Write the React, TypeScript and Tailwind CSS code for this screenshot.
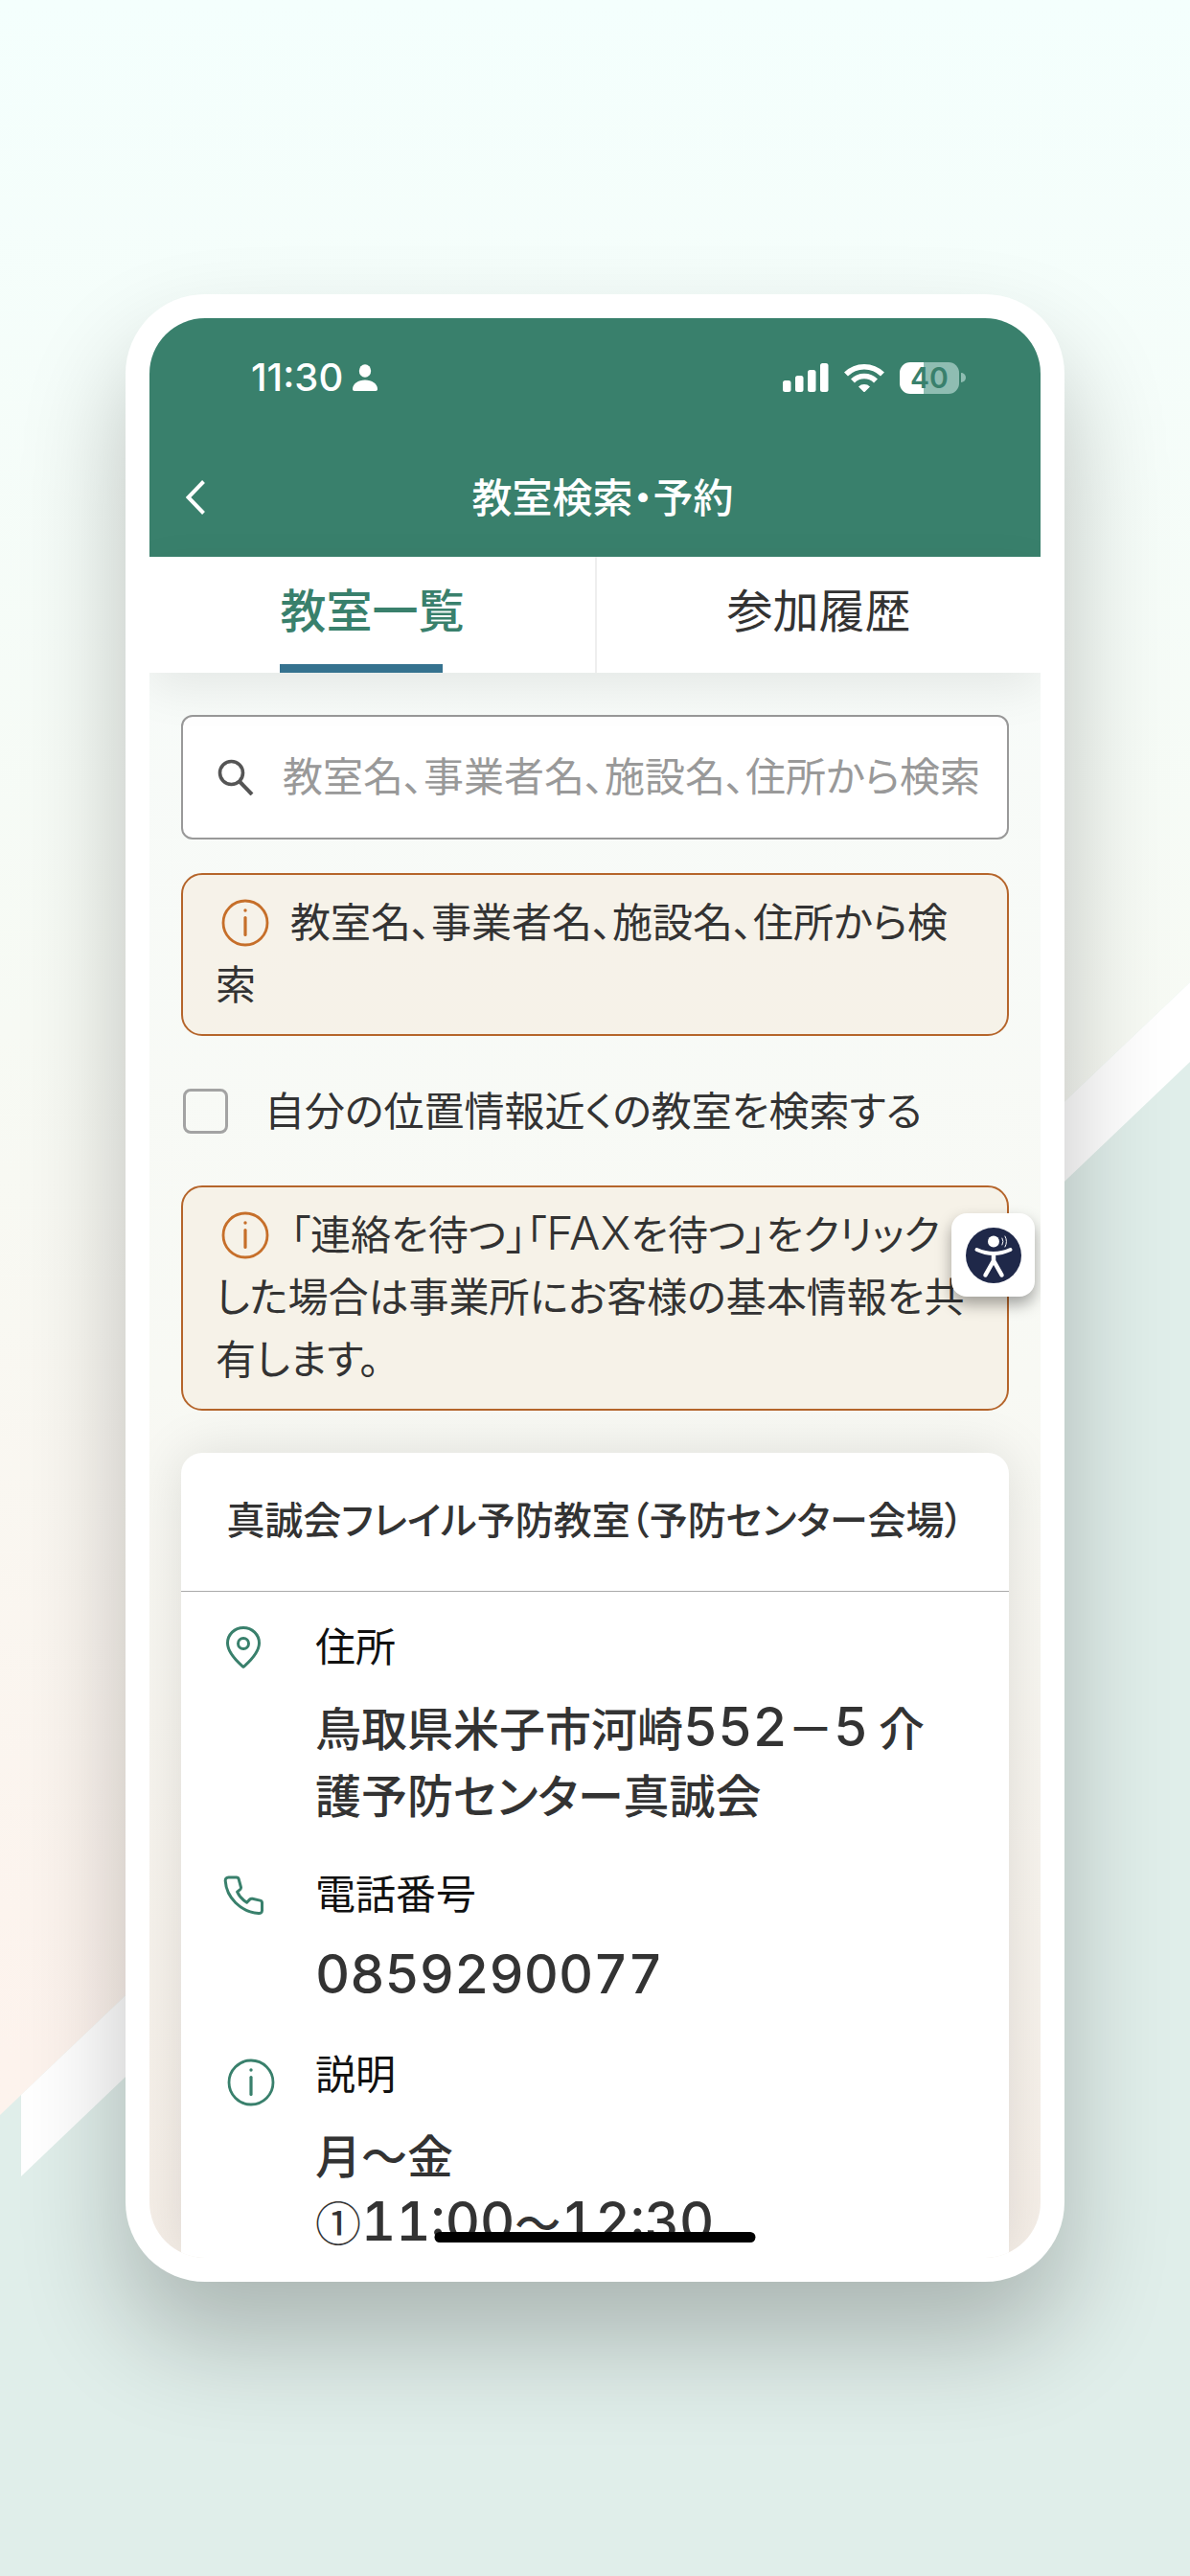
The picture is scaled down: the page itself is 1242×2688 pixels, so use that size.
import type { ReactNode } from 'react';

type IconProps = { className?: string };

function InfoIcon({ className }: IconProps) {
  return (
    <svg viewBox="0 0 50 50" fill="none" className={className} aria-hidden="true">
      <circle cx="25" cy="25" r="23" stroke="currentColor" strokeWidth="2.8" />
      <circle cx="25" cy="12" r="1.7" fill="currentColor" />
      <path d="M25 19.5v18" stroke="currentColor" strokeWidth="3.2" strokeLinecap="round" />
    </svg>
  );
}

function PinIcon({ className }: IconProps) {
  return (
    <svg viewBox="0 0 50 50" fill="none" stroke="currentColor" strokeWidth="3" className={className} aria-hidden="true">
      <path d="M25 45.5c-5-4.500-16.500-14-16.500-25a16.500 16 0 0 1 33 0c0 11-11.500 20.500-16.500 25z" strokeLinejoin="round" />
      <circle cx="25" cy="21" r="5.500" />
    </svg>
  );
}

function PhoneIcon({ className }: IconProps) {
  return (
    <svg viewBox="0 0 50 50" fill="none" stroke="currentColor" strokeWidth="3" strokeLinejoin="round" className={className} aria-hidden="true">
      <path d="M9.500 7h8.300c1.300 0 2 .6 2.300 1.700l2.300 8.300c.3 1.200 0 2-.8 2.700l-3 2.400c2 4.500 5.500 8.200 10 11.100l3-3.100c.8-.8 1.700-1 2.800-.8l8.100 1.800c1.400.3 2 1.200 2 2.500v8c0 2-1.500 3.200-3.600 3C22 43 7.300 28 6.200 10.700 6.100 8.500 7.300 7 9.500 7z" />
    </svg>
  );
}

function AccessibilityIcon() {
  return (
    <svg viewBox="0 0 58 58" className="size-[58px]" aria-hidden="true">
      <circle cx="29" cy="29" r="29" fill="#1f2849" />
      <circle cx="29" cy="14.500" r="6" fill="#fff" />
      <g fill="none" stroke="#fff" strokeLinecap="round" strokeLinejoin="round">
        <path d="M11.500 23q17.500 8 35 0" strokeWidth="4" />
        <path d="M29 28v8M20.500 49.500 29 34.500l8.500 15" strokeWidth="4.500" />
        <path d="M38 11q2 3.500 0 7M41 9q3 5.500 0 11" strokeWidth="1" />
      </g>
    </svg>
  );
}

function StatusBar() {
  return (
    <div className="flex h-[124px] items-center justify-between pr-[78px] pl-[106px]">
      <div className="flex items-center gap-[10px]">
        <span className="font-['Inter'] text-[40px] leading-none font-medium">11:30</span>
        <svg viewBox="0 0 26 28" fill="currentColor" className="h-7 w-[26px]" aria-hidden="true">
          <ellipse cx="13" cy="7" rx="6.200" ry="6.800" />
          <path d="M0 26c0-5.500 6-9.500 13-9.500S26 20.500 26 26c0 1.300-.7 2-2 2H2c-1.300 0-2-.7-2-2z" />
        </svg>
      </div>
      <div className="flex items-center gap-4">
        <svg viewBox="0 0 48 30" fill="currentColor" className="h-[30px] w-12" aria-hidden="true">
          <rect y="18" width="8.500" height="12" rx="2.500" />
          <rect x="13" y="13" width="8.500" height="17" rx="2.500" />
          <rect x="26" y="7" width="8.500" height="23" rx="2.500" />
          <rect x="39" width="8.500" height="30" rx="2.500" />
        </svg>
        <svg viewBox="0 0 42 30" fill="none" stroke="currentColor" strokeWidth="5.600" className="h-[30px] w-[42px]" aria-hidden="true">
          <path d="M2 11.500a27 27 0 0 1 38 0" />
          <path d="M9 18.500a17 17 0 0 1 24 0" />
          <path d="M15 24.500a8.500 8.500 0 0 1 12 0l-6 6z" fill="currentColor" stroke="none" />
        </svg>
        <div className="flex items-center gap-0.5">
          <span className="flex h-[33px] w-[62px] items-center justify-center rounded-[11px] bg-linear-to-r from-white from-40% to-[#8fbdb2] to-40% font-['Inter'] text-[30px] leading-none font-semibold text-[#39806c]">
            40
          </span>
          <span className="h-[10px] w-[5px] rounded-r-full bg-[#8fbdb2]" />
        </div>
      </div>
    </div>
  );
}

function Notice({ children }: { children: ReactNode }) {
  return (
    <p className="rounded-[22px] border-2 border-[#b5652b] bg-[#f5f1e7]/90 pt-[14px] pr-10 pb-[22px] pl-[34px] text-[42px] leading-[65px] text-[#333]">
      <InfoIcon className="-mt-2 mr-[22px] ml-[6px] inline-block size-[50px] align-middle text-[#c66f2a]" />
      {children}
    </p>
  );
}

type DetailProps = { icon: ReactNode; label: string; children: ReactNode };

function Detail({ icon, label, children }: DetailProps) {
  return (
    <div className="flex">
      <div className="w-[100px] shrink-0 pt-[10px] text-[#39806c]">{icon}</div>
      <dl>
        <dt className="text-[42px] leading-[64px] text-[#111]">{label}</dt>
        <dd className="mt-[18px] text-[48px] leading-[70px] font-medium text-[#333]">{children}</dd>
      </dl>
    </div>
  );
}

function Num({ children }: { children: string }) {
  return <span className="font-['Inter'] text-[56px] leading-none tabular-nums">{children}</span>;
}

export default function App() {
  return (
    <main className="relative isolate min-h-screen bg-linear-to-b from-[#f4fffd] via-[#f7faf4] via-40% to-[#fdf3ed] to-80% py-[307px] font-['Noto_Sans_CJK_JP',sans-serif] [font-feature-settings:'palt']">
      <svg viewBox="0 0 1242 2688" preserveAspectRatio="none" className="absolute inset-0 -z-10 size-full" aria-hidden="true">
        <path d="M0 2207 1242 1025V2688H0z" fill="#e0eeea" />
        <path d="M22 2186 1242 1025v83L22 2271z" fill="#fff" />
      </svg>

      <div className="mx-auto max-w-[980px] rounded-[83px] bg-white p-[25px] shadow-[0_60px_110px_rgba(0,0,0,0.24)]">
        <div className="relative overflow-hidden rounded-[58px] bg-linear-to-b from-[#f7fcfb] via-[#f8f9f4] via-55% to-[#f5eee7]">
          <header className="bg-[#39806c] text-white">
            <StatusBar />
            <div className="flex h-[125px] items-center">
              <button type="button" aria-label="戻る" className="flex w-24 justify-center">
                <svg viewBox="0 0 20 36" fill="none" stroke="currentColor" strokeWidth="4" className="h-9 w-5" aria-hidden="true">
                  <path d="M18.500 1.500 2.500 18l16 16.500" />
                </svg>
              </button>
              <h1 className="flex-1 pb-1 text-center text-[42px] font-medium">教室検索・予約</h1>
              <div className="w-20" />
            </div>
          </header>

          <nav className="relative grid h-[121px] grid-cols-2 bg-white text-[48px] leading-[106px] shadow-[0_16px_50px_rgba(0,0,0,0.08)]">
            <button type="button" className="flex justify-center">
              <span className="relative h-full font-medium text-[#39806c]">
                教室一覧
                <span className="absolute bottom-0 left-0 h-[9px] w-[170px] bg-[#35728f]" />
              </span>
            </button>
            <button type="button" className="flex justify-center border-l-2 border-[#eee] text-[#333]">参加履歴</button>
          </nav>

          <div className="px-[33px] pt-11">
            <label className="flex h-[130px] items-center gap-[30px] rounded-xl border-2 border-[#999] bg-white pl-9 text-[42px]">
              <svg viewBox="0 0 38 38" fill="none" stroke="#555" strokeWidth="3.600" className="size-[38px] shrink-0" aria-hidden="true">
                <circle cx="14.500" cy="14.500" r="12" />
                <path d="M23 23.500 36 37" strokeWidth="4" />
              </svg>
              <input
                type="text"
                aria-label="教室を検索"
                placeholder="教室名、事業者名、施設名、住所から検索"
                className="min-w-0 flex-1 pb-2 outline-none placeholder:text-[#999] [font-feature-settings:'palt']"
              />
            </label>

            <div className="mt-[35px]">
              <Notice>教室名、事業者名、施設名、住所から検索</Notice>
            </div>

            <label className="flex h-[156px] items-center gap-[38px] pl-[2px] text-[42px] text-[#333]">
              <input type="checkbox" className="size-[47px] appearance-none rounded-lg border-3 border-[#a3a3a3]" />
              <span className="pb-[6px]">自分の位置情報近くの教室を検索する</span>
            </label>

            <Notice>
              「連絡を待つ」「<span className="font-['Inter'] text-[48px] leading-none font-light">FAX</span>を待つ」をクリック
              <br />
              した場合は事業所にお客様の基本情報を共有します。
            </Notice>

            <section className="mt-11 rounded-t-[22px] bg-white shadow-[0_0_56px_rgba(0,0,0,0.11)]">
              <h2 className="border-b border-[#aaa] pb-2 text-center text-[40px] leading-[136px] font-medium text-[#333]">
                真誠会フレイル予防教室（予防センター会場）
              </h2>
              <div className="flex flex-col gap-9 pt-[23px] pr-14 pb-1 pl-10">
                <Detail icon={<PinIcon className="size-[50px]" />} label="住所">
                  鳥取県米子市河崎<Num>552</Num>－<Num>5</Num> 介護予防センター真誠会
                </Detail>
                <Detail icon={<PhoneIcon className="size-[50px]" />} label="電話番号">
                  <Num>0859290077</Num>
                </Detail>
                <Detail icon={<InfoIcon className="mt-2 ml-2 size-[50px]" />} label="説明">
                  月～金
                  <br />
                  <span className="font-normal">①</span>
                  <Num>11:00</Num>～<Num>12:30</Num>
                </Detail>
              </div>
            </section>
          </div>

          <button
            type="button"
            aria-label="アクセシビリティ"
            className="absolute top-[934px] right-[6px] flex size-[87px] items-center justify-center rounded-2xl bg-white shadow-[0_8px_16px_rgba(0,0,0,0.35)]"
          >
            <AccessibilityIcon />
          </button>
          <div className="absolute bottom-4 left-1/2 h-[11px] w-[335px] -translate-x-1/2 rounded-full bg-black" />
        </div>
      </div>
    </main>
  );
}
